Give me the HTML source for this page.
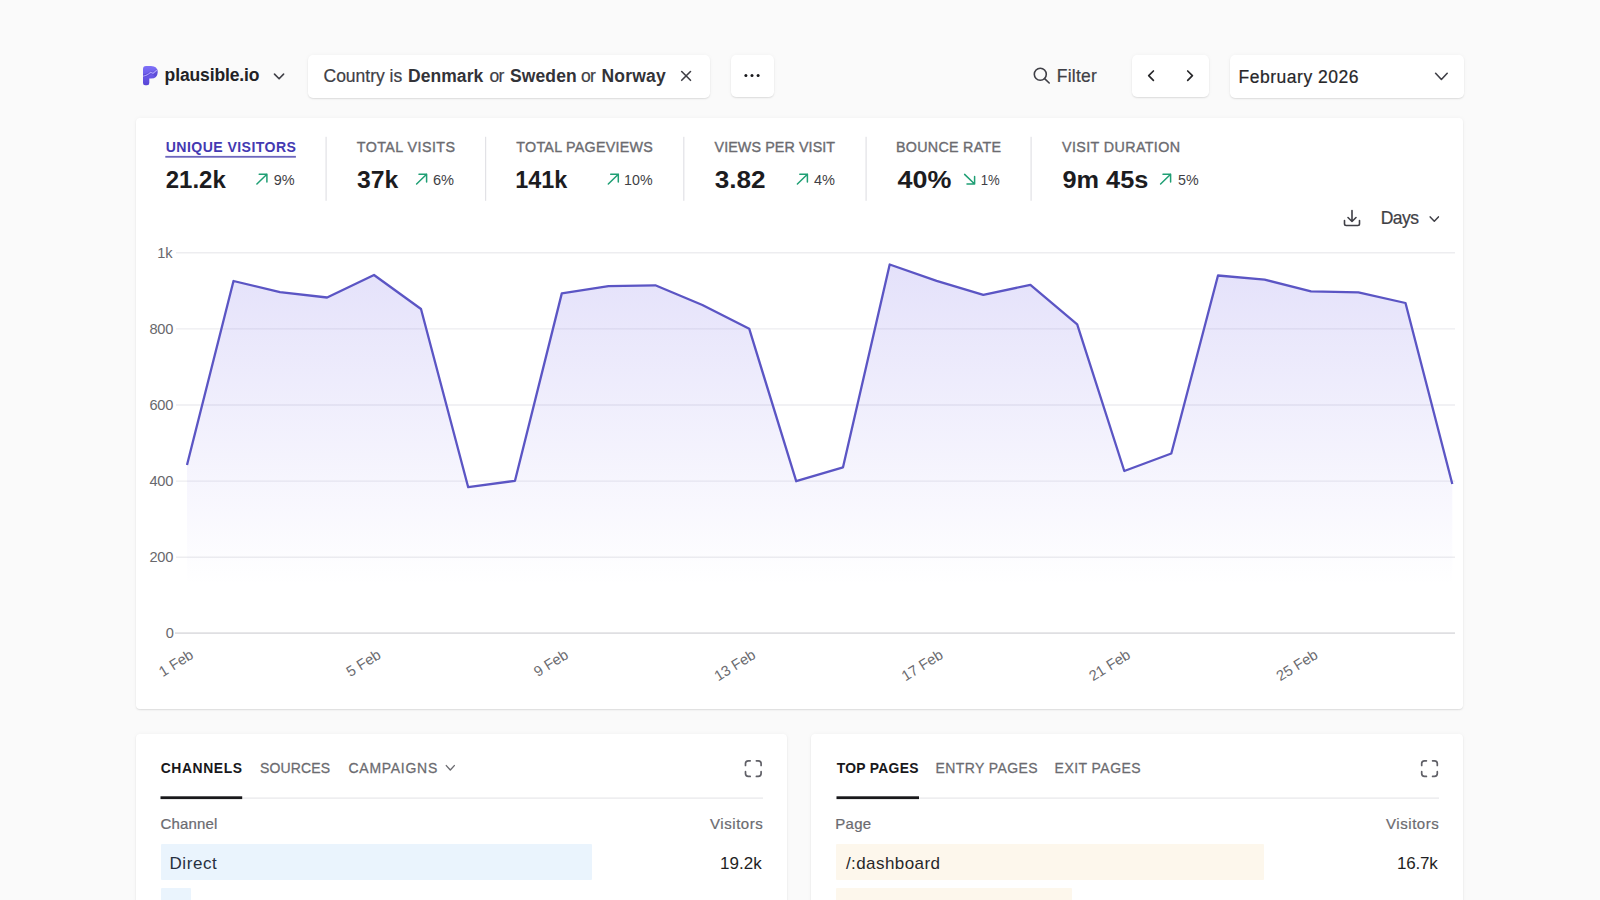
<!DOCTYPE html>
<html><head><meta charset="utf-8"><style>
html,body{margin:0;padding:0;width:1600px;height:900px;overflow:hidden;background:#fafafa;font-family:"Liberation Sans", sans-serif;}
.card{position:absolute;background:#fff;border-radius:5px;box-shadow:0 1px 1.5px rgba(0,0,0,0.1),0 0 4px rgba(0,0,0,0.04);}
svg{position:absolute;left:0;top:0;}
</style></head><body>
<div class="card" style="left:308px;top:54.5px;width:402px;height:43px;border-radius:5px"></div>
<div class="card" style="left:730.5px;top:55px;width:43px;height:42px;border-radius:5px"></div>
<div class="card" style="left:1132px;top:55px;width:77px;height:42px;border-radius:5px"></div>
<div class="card" style="left:1230px;top:55px;width:233.5px;height:42.5px;border-radius:5px"></div>
<div class="card" style="left:136px;top:118px;width:1327px;height:591px;border-radius:4px"></div>
<div class="card" style="left:136px;top:734px;width:651px;height:200px;border-radius:4px"></div>
<div class="card" style="left:811px;top:734px;width:652px;height:200px;border-radius:4px"></div>
<div style="position:absolute;left:161px;top:843.6px;width:431px;height:36.8px;background:#eaf4fd;border-radius:1px"></div>
<div style="position:absolute;left:161px;top:887.5px;width:30px;height:36px;background:#eaf4fd;border-radius:1px"></div>
<div style="position:absolute;left:836px;top:843.6px;width:428px;height:36.8px;background:#fdf7ec;border-radius:1px"></div>
<div style="position:absolute;left:836px;top:887.5px;width:236px;height:36px;background:#fdf7ec;border-radius:1px"></div>
<svg width="1600" height="900" viewBox="0 0 1600 900" font-family='"Liberation Sans", sans-serif'>
<defs>
<linearGradient id="g" x1="0" y1="258" x2="0" y2="585" gradientUnits="userSpaceOnUse">
<stop offset="0" stop-color="#6e5fe6" stop-opacity="0.19"/>
<stop offset="1" stop-color="#6e5fe6" stop-opacity="0"/>
</linearGradient>
<linearGradient id="logo" x1="0" y1="0" x2="0" y2="1">
<stop offset="0" stop-color="#7e70f8"/><stop offset="1" stop-color="#5744d6"/>
</linearGradient>
</defs>
<line x1="176" x2="1455" y1="252.80" y2="252.80" stroke="#ededf0" stroke-width="1.4"/><line x1="176" x2="1455" y1="328.90" y2="328.90" stroke="#ededf0" stroke-width="1.4"/><line x1="176" x2="1455" y1="405.00" y2="405.00" stroke="#ededf0" stroke-width="1.4"/><line x1="176" x2="1455" y1="481.10" y2="481.10" stroke="#ededf0" stroke-width="1.4"/><line x1="176" x2="1455" y1="557.20" y2="557.20" stroke="#ededf0" stroke-width="1.4"/><line x1="175" x2="1455" y1="633.2" y2="633.2" stroke="#dfdfe2" stroke-width="1.7"/>
<path d="M187,633 L187.0,465.0 L233.5,281.0 L280.0,292.2 L327.1,297.5 L374.0,275.0 L421.0,309.0 L468.2,487.2 L515.0,480.8 L561.8,293.4 L608.5,286.2 L655.3,285.3 L702.4,305.0 L749.2,328.7 L796.2,481.2 L843.0,467.3 L889.7,264.5 L936.6,280.8 L983.3,294.9 L1030.4,284.8 L1077.2,324.3 L1124.3,471.0 L1171.3,453.5 L1218.0,275.5 L1264.6,279.6 L1311.0,291.4 L1358.4,292.3 L1405.5,303.0 L1452.3,484.0 L1452.3,633 Z" fill="url(#g)"/>
<polyline points="187.0,465.0 233.5,281.0 280.0,292.2 327.1,297.5 374.0,275.0 421.0,309.0 468.2,487.2 515.0,480.8 561.8,293.4 608.5,286.2 655.3,285.3 702.4,305.0 749.2,328.7 796.2,481.2 843.0,467.3 889.7,264.5 936.6,280.8 983.3,294.9 1030.4,284.8 1077.2,324.3 1124.3,471.0 1171.3,453.5 1218.0,275.5 1264.6,279.6 1311.0,291.4 1358.4,292.3 1405.5,303.0 1452.3,484.0" fill="none" stroke="#5b55c4" stroke-width="2.3" stroke-linejoin="round"/>
<text x="0" y="0" transform="translate(194.5,657.4) rotate(-32)" text-anchor="end" font-size="14.6" fill="#6b6b70">1 Feb</text><text x="0" y="0" transform="translate(381.9,657.4) rotate(-32)" text-anchor="end" font-size="14.6" fill="#6b6b70">5 Feb</text><text x="0" y="0" transform="translate(569.3,657.4) rotate(-32)" text-anchor="end" font-size="14.6" fill="#6b6b70">9 Feb</text><text x="0" y="0" transform="translate(756.7,657.4) rotate(-32)" text-anchor="end" font-size="14.6" fill="#6b6b70">13 Feb</text><text x="0" y="0" transform="translate(944.1,657.4) rotate(-32)" text-anchor="end" font-size="14.6" fill="#6b6b70">17 Feb</text><text x="0" y="0" transform="translate(1131.5,657.4) rotate(-32)" text-anchor="end" font-size="14.6" fill="#6b6b70">21 Feb</text><text x="0" y="0" transform="translate(1318.9,657.4) rotate(-32)" text-anchor="end" font-size="14.6" fill="#6b6b70">25 Feb</text>
<!-- logo -->
<path d="M143,69 Q143,66 146,66 L151,66 Q157.6,66 157.6,72.3 Q157.6,78.6 151,78.6 L149.3,78.6 L149.3,83 Q149.3,85.2 147,85.2 L145.2,85.2 Q143,85.2 143,83 Z" fill="url(#logo)"/>
<path d="M143,74.5 L146,73.8 L149,72.2 L150.8,70.8 L153,72 L156.6,68.8 L157.6,70 L157.6,72.3 Q157.6,75 155.5,77 L153.5,75 L151,74 L149,75.5 L146,76.8 L143,77.2 Z" fill="#5240c8" opacity="0.55"/>
<path d="M143,76.2 L146.3,75.2 L149,73.6 L150.8,72.2 L153,73.4 L157,70" fill="none" stroke="#b4a9ff" stroke-width="1.1" opacity="0.9"/>
<!-- site chevron -->
<path d="M274.5,74.1 L279.1,78.8 L283.6,74.1" fill="none" stroke="#3f3f46" stroke-width="1.6" stroke-linecap="round" stroke-linejoin="round"/>
<!-- close X -->
<path d="M681.7,71.5 L690.5,80.3 M690.5,71.5 L681.7,80.3" stroke="#3f3f46" stroke-width="1.6" stroke-linecap="round"/>
<!-- dots -->
<circle cx="745.9" cy="75.6" r="1.5" fill="#18181b"/><circle cx="752" cy="75.6" r="1.5" fill="#18181b"/><circle cx="758.1" cy="75.6" r="1.5" fill="#18181b"/>
<!-- search -->
<circle cx="1040.3" cy="74.3" r="6" fill="none" stroke="#3f3f46" stroke-width="1.6"/>
<path d="M1044.6,78.6 L1049.2,83" stroke="#3f3f46" stroke-width="1.6" stroke-linecap="round"/>
<!-- prev next -->
<path d="M1153.4,71 L1148.7,75.7 L1153.4,80.4" fill="none" stroke="#27272a" stroke-width="1.7" stroke-linecap="round" stroke-linejoin="round"/>
<path d="M1187.7,71 L1192.4,75.7 L1187.7,80.4" fill="none" stroke="#27272a" stroke-width="1.7" stroke-linecap="round" stroke-linejoin="round"/>
<!-- date chevron -->
<path d="M1435.6,73.3 L1441.4,79.5 L1447.2,73.3" fill="none" stroke="#3f3f46" stroke-width="1.6" stroke-linecap="round" stroke-linejoin="round"/>
<!-- underline -->
<rect x="165.3" y="155.9" width="130.6" height="1.8" fill="#6c66bd"/>
<!-- dividers -->
<rect x="325.5" y="136.8" width="1.2" height="64" fill="#e2e2e6"/>
<rect x="485" y="136.8" width="1.2" height="64" fill="#e2e2e6"/>
<rect x="683.2" y="136.8" width="1.2" height="64" fill="#e2e2e6"/>
<rect x="865.5" y="136.8" width="1.2" height="64" fill="#e2e2e6"/>
<rect x="1030.5" y="136.8" width="1.2" height="64" fill="#e2e2e6"/>
<!-- arrows -->
<g stroke="#1f9f74" stroke-width="1.5" fill="none" stroke-linecap="round" stroke-linejoin="round">
<path d="M256.9,184 L266.9,174.3 M259.2,174.3 L266.9,174.3 L266.9,182"/><path d="M416.6,184 L426.6,174.3 M419.0,174.3 L426.6,174.3 L426.6,182"/><path d="M608.3,184 L618.3,174.3 M610.7,174.3 L618.3,174.3 L618.3,182"/><path d="M797.4,184 L807.4,174.3 M799.8,174.3 L807.4,174.3 L807.4,182"/><path d="M1160.6,184 L1170.6,174.3 M1163.0,174.3 L1170.6,174.3 L1170.6,182"/>
<path d="M964.6,174.4 L974.6,184 M967,184 L974.6,184 L974.6,176.4"/>
</g>
<!-- download icon -->
<g stroke="#3f3f46" stroke-width="1.6" fill="none" stroke-linecap="round" stroke-linejoin="round">
<path d="M1352,210.5 L1352,221.5 M1348,217.5 L1352,221.5 L1356,217.5"/>
<path d="M1344.5,220.5 L1344.5,223.8 Q1344.5,225.5 1346.2,225.5 L1357.8,225.5 Q1359.5,225.5 1359.5,223.8 L1359.5,220.5"/>
</g>
<path d="M1430.2,216.9 L1434.3,221.2 L1438.4,216.9" fill="none" stroke="#3f3f46" stroke-width="1.5" stroke-linecap="round" stroke-linejoin="round"/>
<!-- panel lines -->
<rect x="160.5" y="797.5" width="602.5" height="1.2" fill="#e7e7ea"/>
<rect x="160.5" y="796.3" width="81.7" height="2.8" fill="#18181b"/>
<rect x="836.5" y="797.5" width="602.5" height="1.2" fill="#e7e7ea"/>
<rect x="836.5" y="796.3" width="82.5" height="2.8" fill="#18181b"/>
<path d="M446.3,765.6 L450.3,770 L454.3,765.6" fill="none" stroke="#6b6b70" stroke-width="1.4" stroke-linecap="round" stroke-linejoin="round"/>
<!-- expand icons -->
<g stroke="#606067" stroke-width="1.7" fill="none" stroke-linecap="round" stroke-linejoin="round">
<path d="M745.5,765.5 L745.5,763.5999999999999 Q745.5,760.8 748.3,760.8 L750.2,760.8 M756.4,760.8 L758.3000000000001,760.8 Q761.1,760.8 761.1,763.5999999999999 L761.1,765.5 M761.1,771.6999999999999 L761.1,773.6 Q761.1,776.4 758.3000000000001,776.4 L756.4,776.4 M750.2,776.4 L748.3,776.4 Q745.5,776.4 745.5,773.6 L745.5,771.6999999999999"/>
<path d="M1421.7,765.5 L1421.7,763.5999999999999 Q1421.7,760.8 1424.5,760.8 L1426.4,760.8 M1432.6,760.8 L1434.5,760.8 Q1437.3,760.8 1437.3,763.5999999999999 L1437.3,765.5 M1437.3,771.6999999999999 L1437.3,773.6 Q1437.3,776.4 1434.5,776.4 L1432.6,776.4 M1426.4,776.4 L1424.5,776.4 Q1421.7,776.4 1421.7,773.6 L1421.7,771.6999999999999"/>
</g>
<text x="164.60" y="81.30" font-size="17.5" font-weight="700" fill="#222226" letter-spacing="-0.130">plausible.io</text><text x="323.50" y="82.00" font-size="17.5" font-weight="400" fill="#3f3f46" letter-spacing="-0.003" stroke="#3f3f46" stroke-width="0.22">Country is</text><text x="408.00" y="82.00" font-size="17.5" font-weight="700" fill="#333338" letter-spacing="0.056">Denmark</text><text x="489.50" y="82.00" font-size="17.5" font-weight="400" fill="#3f3f46" letter-spacing="-0.733" stroke="#3f3f46" stroke-width="0.22">or</text><text x="510.00" y="82.00" font-size="17.5" font-weight="700" fill="#333338" letter-spacing="0.112">Sweden</text><text x="581.00" y="82.00" font-size="17.5" font-weight="400" fill="#3f3f46" letter-spacing="-0.733" stroke="#3f3f46" stroke-width="0.22">or</text><text x="601.50" y="82.00" font-size="17.5" font-weight="700" fill="#333338" letter-spacing="0.203">Norway</text><text x="1056.80" y="82.30" font-size="17.5" font-weight="400" fill="#3f3f46" letter-spacing="0.228" stroke="#3f3f46" stroke-width="0.22">Filter</text><text x="1238.50" y="82.60" font-size="17.5" font-weight="400" fill="#27272a" letter-spacing="0.518" stroke="#27272a" stroke-width="0.22">February 2026</text><text transform="translate(165.70,151.70) scale(1,1.1)" font-size="14.1" font-weight="700" fill="#4439b2" letter-spacing="0.432">UNIQUE VISITORS</text><text transform="translate(356.80,151.85) scale(1,1.08)" font-size="14.3" font-weight="400" fill="#6b6b70" letter-spacing="0.429" stroke="#6b6b70" stroke-width="0.35">TOTAL VISITS</text><text transform="translate(516.30,151.85) scale(1,1.08)" font-size="14.3" font-weight="400" fill="#6b6b70" letter-spacing="0.262" stroke="#6b6b70" stroke-width="0.35">TOTAL PAGEVIEWS</text><text transform="translate(714.50,151.85) scale(1,1.08)" font-size="14.3" font-weight="400" fill="#6b6b70" letter-spacing="0.105" stroke="#6b6b70" stroke-width="0.35">VIEWS PER VISIT</text><text transform="translate(896.00,151.85) scale(1,1.08)" font-size="14.3" font-weight="400" fill="#6b6b70" letter-spacing="0.283" stroke="#6b6b70" stroke-width="0.35">BOUNCE RATE</text><text transform="translate(1062.00,151.85) scale(1,1.08)" font-size="14.3" font-weight="400" fill="#6b6b70" letter-spacing="0.385" stroke="#6b6b70" stroke-width="0.35">VISIT DURATION</text><text transform="translate(165.70,188.40) scale(0.9998,1)" font-size="24" font-weight="700" fill="#1c1c1f">21.2k</text><text transform="translate(357.00,188.40) scale(1.0321,1)" font-size="24" font-weight="700" fill="#1c1c1f">37k</text><text transform="translate(515.33,188.40) scale(0.9747,1)" font-size="24" font-weight="700" fill="#1c1c1f">141k</text><text transform="translate(714.80,188.40) scale(1.0892,1)" font-size="24" font-weight="700" fill="#1c1c1f">3.82</text><text transform="translate(897.50,188.40) scale(1.1217,1)" font-size="24" font-weight="700" fill="#1c1c1f">40%</text><text transform="translate(1062.50,188.40) scale(1.0549,1)" font-size="24" font-weight="700" fill="#1c1c1f">9m 45s</text><text transform="translate(273.70,184.60) scale(0.9464,1)" font-size="15.3" font-weight="400" fill="#3f3f46">9%</text><text transform="translate(433.00,184.60) scale(0.9552,1)" font-size="15.3" font-weight="400" fill="#3f3f46">6%</text><text transform="translate(624.07,184.60) scale(0.9295,1)" font-size="15.3" font-weight="400" fill="#3f3f46">10%</text><text transform="translate(814.00,184.60) scale(0.9508,1)" font-size="15.3" font-weight="400" fill="#3f3f46">4%</text><text transform="translate(980.64,184.60) scale(0.8602,1)" font-size="15.3" font-weight="400" fill="#3f3f46">1%</text><text transform="translate(1178.00,184.60) scale(0.9330,1)" font-size="15.3" font-weight="400" fill="#3f3f46">5%</text><text x="1380.75" y="224.40" font-size="17.5" font-weight="400" fill="#3f3f46" letter-spacing="-0.524" stroke="#3f3f46" stroke-width="0.22">Days</text><text x="157.30" y="257.50" font-size="14.6" font-weight="400" fill="#68686c" letter-spacing="-0.216">1k</text><text x="149.40" y="333.60" font-size="14.6" font-weight="400" fill="#68686c" letter-spacing="-0.216">800</text><text x="149.40" y="409.70" font-size="14.6" font-weight="400" fill="#68686c" letter-spacing="-0.216">600</text><text x="149.40" y="485.80" font-size="14.6" font-weight="400" fill="#68686c" letter-spacing="-0.216">400</text><text x="149.40" y="561.90" font-size="14.6" font-weight="400" fill="#68686c" letter-spacing="-0.216">200</text><text x="165.70" y="638.10" font-size="14.6" font-weight="400" fill="#68686c" letter-spacing="0.000">0</text><text transform="translate(160.70,772.60) scale(1,1.12)" font-size="13.9" font-weight="700" fill="#18181b" letter-spacing="0.585">CHANNELS</text><text transform="translate(260.00,772.60) scale(1,1.1)" font-size="14.0" font-weight="400" fill="#6b6b70" letter-spacing="0.142" stroke="#6b6b70" stroke-width="0.25">SOURCES</text><text transform="translate(348.50,772.60) scale(1,1.1)" font-size="14.0" font-weight="400" fill="#6b6b70" letter-spacing="0.733" stroke="#6b6b70" stroke-width="0.25">CAMPAIGNS</text><text transform="translate(836.70,772.60) scale(1,1.12)" font-size="13.9" font-weight="700" fill="#18181b" letter-spacing="0.288">TOP PAGES</text><text transform="translate(935.60,772.60) scale(1,1.1)" font-size="14.0" font-weight="400" fill="#6b6b70" letter-spacing="0.395" stroke="#6b6b70" stroke-width="0.25">ENTRY PAGES</text><text transform="translate(1054.60,772.60) scale(1,1.1)" font-size="14.0" font-weight="400" fill="#6b6b70" letter-spacing="0.459" stroke="#6b6b70" stroke-width="0.25">EXIT PAGES</text><text x="160.60" y="828.60" font-size="15" font-weight="400" fill="#6b6b70" letter-spacing="0.143" stroke="#6b6b70" stroke-width="0.22">Channel</text><text x="710.00" y="828.60" font-size="15" font-weight="400" fill="#6b6b70" letter-spacing="0.557" stroke="#6b6b70" stroke-width="0.22">Visitors</text><text x="835.25" y="828.60" font-size="15" font-weight="400" fill="#6b6b70" letter-spacing="0.270" stroke="#6b6b70" stroke-width="0.22">Page</text><text x="1386.00" y="828.60" font-size="15" font-weight="400" fill="#6b6b70" letter-spacing="0.557" stroke="#6b6b70" stroke-width="0.22">Visitors</text><text x="169.50" y="868.70" font-size="17" font-weight="400" fill="#27303f" letter-spacing="0.566">Direct</text><text x="720.00" y="868.70" font-size="17" font-weight="400" fill="#1f1f23" letter-spacing="0.028">19.2k</text><text x="845.90" y="868.70" font-size="17" font-weight="400" fill="#27272a" letter-spacing="0.427">/:dashboard</text><text x="1397.00" y="868.70" font-size="17" font-weight="400" fill="#1f1f23" letter-spacing="-0.222">16.7k</text>
</svg>
</body></html>
